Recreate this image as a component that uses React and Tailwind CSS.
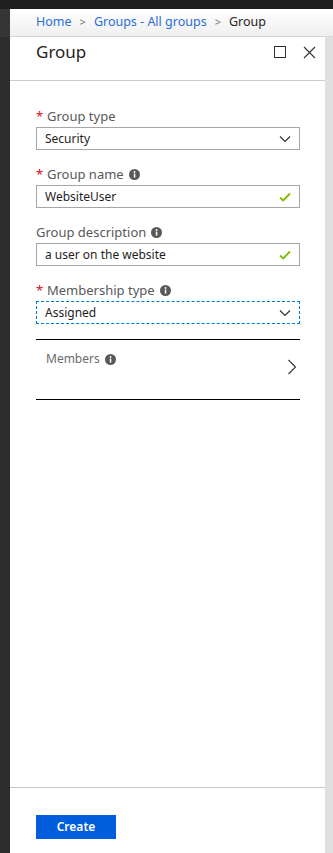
import React from "react";

const font = { fontFamily: '"Segoe UI", "Noto Sans", "Open Sans", sans-serif' };

function Info() {
  return (
    <svg width="11" height="11" viewBox="0 0 11 11" className="inline-block ml-[5px]">
      <circle cx="5.5" cy="5.5" r="5.5" fill="#595959" />
      <rect x="4.8" y="4.6" width="1.5" height="4" fill="#fff" />
      <circle cx="5.55" cy="3" r="0.9" fill="#fff" />
    </svg>
  );
}

function Chevron() {
  return (
    <svg width="12" height="8" viewBox="0 0 12 8">
      <path d="M1 1.5 L6 6.5 L11 1.5" fill="none" stroke="#333" strokeWidth="1.2" />
    </svg>
  );
}

function Check() {
  return (
    <svg width="12" height="10" viewBox="0 0 12 10">
      <path d="M1 5.5 L4.2 8.5 L11 1.5" fill="none" stroke="#7fba00" strokeWidth="1.8" />
    </svg>
  );
}

function Label({ required, info, children }) {
  return (
    <div className="h-[20px] mb-[1px] flex items-center text-[13px] leading-[20px] text-[#595959]">
      {required && <span className="text-[#e00b1c] w-[11px] text-[13px]">*</span>}
      <span>{children}</span>
      {info && <Info />}
    </div>
  );
}

function Field({ value, icon, focus }) {
  return (
    <div
      className={
        "h-[23px] flex items-center justify-between pl-[8px] pr-[8px] text-[12px] text-[#1e1e1e] " +
        (focus ? "border border-dashed border-[#0078d7]" : "border border-[#a6a6a6]")
      }
    >
      <span>{value}</span>
      {icon}
    </div>
  );
}

export default function App() {
  return (
    <div className="h-[853px] flex flex-col bg-[#1e1e1e] overflow-hidden" style={font}>
      <div className="h-[9px] shrink-0 bg-[#1e1e1e]" />
      <div className="flex flex-1 min-h-0">
        {/* left dark strip */}
        <div className="w-[10px] shrink-0 flex flex-col bg-[#2d2d2b]">
          <div className="h-[28px] bg-[#353533]" />
        </div>
        <div className="flex-1 flex flex-col min-w-0">
          {/* breadcrumb */}
          <div className="h-[28px] shrink-0 flex items-center pl-[26px] gap-[8px] text-[12.5px] bg-gradient-to-b from-white to-[#efefef] border-b border-[#d6d6d6]">
            <span className="text-[#2a6ed6]">Home</span>
            <span className="text-[#777] text-[11px]">&gt;</span>
            <span className="text-[#2a6ed6]">Groups - All groups</span>
            <span className="text-[#777] text-[11px]">&gt;</span>
            <span className="text-[#252525]">Group</span>
          </div>
          <div className="flex flex-1 min-h-0">
            {/* blade */}
            <div className="flex-1 flex flex-col bg-white">
              <div className="h-[44px] shrink-0 flex items-start justify-between pl-[26px] pr-[9px] pt-[3px] border-b border-[#cccccc]">
                <h1 className="text-[17px] leading-[24px] text-[#1e1e1e]">Group</h1>
                <div className="flex items-center gap-[17px] h-[24px]">
                  <div className="w-[12px] h-[12px] border border-[#333]" />
                  <svg width="13" height="13" viewBox="0 0 13 13">
                    <path d="M1 1 L12 12 M12 1 L1 12" stroke="#333" strokeWidth="1.1" />
                  </svg>
                </div>
              </div>

              <div className="flex-1 pt-[25px] pl-[26px] pr-[25px]">
                <Label required>Group type</Label>
                <Field value="Security" icon={<Chevron />} />

                <div className="mt-[14px]">
                  <Label required info>Group name</Label>
                  <Field value="WebsiteUser" icon={<Check />} />
                </div>

                <div className="mt-[14px]">
                  <Label info>Group description</Label>
                  <Field value="a user on the website" icon={<Check />} />
                </div>

                <div className="mt-[14px]">
                  <Label required info>Membership type</Label>
                  <Field value="Assigned" icon={<Chevron />} focus />
                </div>

                <div className="mt-[15px] h-[61px] border-t border-b border-black flex justify-between pl-[10px] pr-[3px]">
                  <div className="pt-[8px] text-[12px] leading-[20px] text-[#6b6b6b] flex items-center h-[30px]">
                    Members
                    <Info />
                  </div>
                  <svg width="10" height="16" viewBox="0 0 10 16" className="mt-[19px]">
                    <path d="M1.5 1 L8.5 8 L1.5 15" fill="none" stroke="#333" strokeWidth="1.1" />
                  </svg>
                </div>
              </div>

              <div className="h-[66px] shrink-0 border-t border-[#c4c4c4] pt-[25px] pl-[26px]">
                <button className="w-[80px] h-[24px] bg-[#005ddc] text-white text-[12px] font-semibold">
                  Create
                </button>
              </div>
            </div>
            {/* right strip */}
            <div className="w-[8px] shrink-0 bg-[#e0e0e0]" />
          </div>
        </div>
      </div>
    </div>
  );
}
